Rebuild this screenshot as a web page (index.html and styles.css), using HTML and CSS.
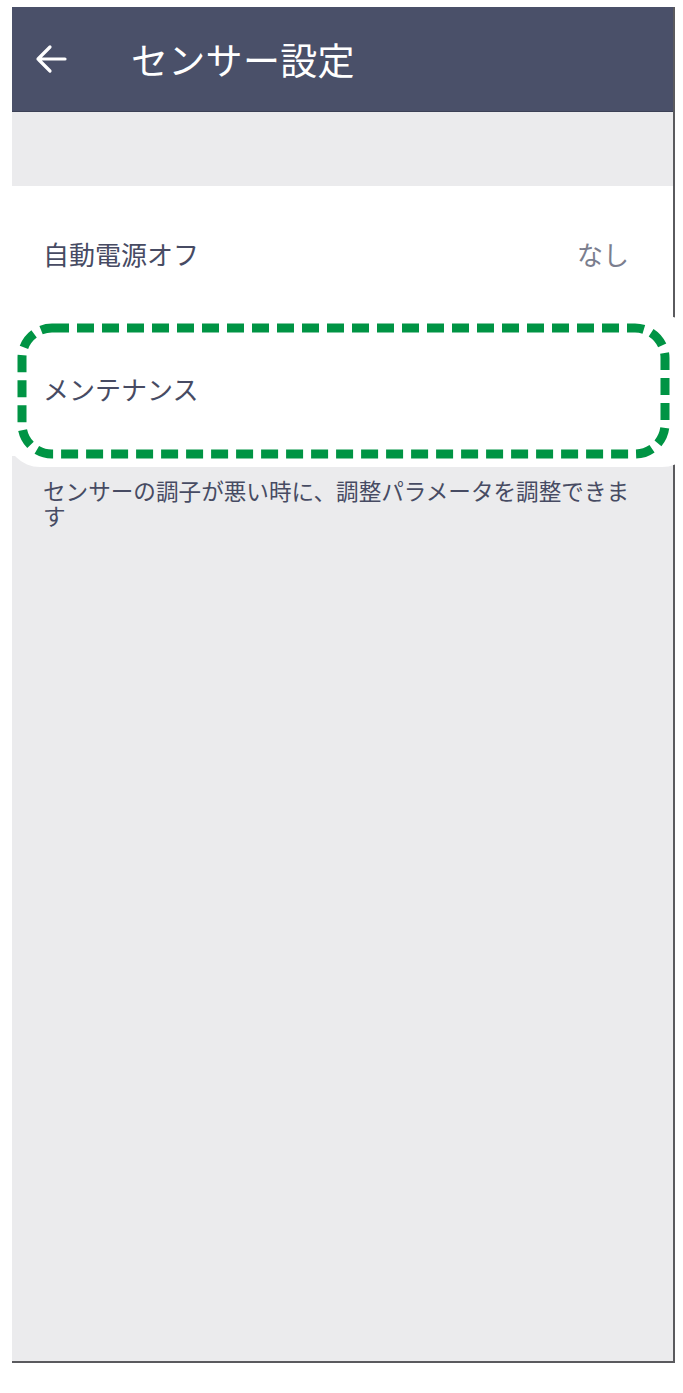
FILE: index.html
```html
<!DOCTYPE html>
<html lang="ja">
<head>
<meta charset="utf-8">
<title>センサー設定</title>
<link rel="stylesheet" href="styles.css">
</head>
<body>
<div class="frame">
  <header class="appbar">
    <svg class="back" width="34" height="30" viewBox="0 0 34 30">
      <path d="M31 15H4M16 3L4 15l12 12" fill="none" stroke="#fff" stroke-width="3.2" stroke-linecap="round" stroke-linejoin="round"/>
    </svg>
    <h1 class="title">センサー設定</h1>
  </header>
  <div class="spacer"></div>
  <ul class="list">
    <li class="row"><span class="label">自動電源オフ</span><span class="value">なし</span></li>
    <li class="row"><span class="label">メンテナンス</span></li>
  </ul>
  <p class="desc">センサーの調子が悪い時に、調整パラメータを調整できます</p>
</div>
<div class="highlight">
  <svg class="dash" width="683" height="160" viewBox="0 0 683 160">
    <rect x="22" y="13" width="643" height="126" rx="30" ry="30" fill="none" stroke="#009444" stroke-width="9" stroke-dasharray="17 8"/>
  </svg>
</div>
</body>
</html>
```

FILE: styles.css
```css
html, body {
  margin: 0;
  padding: 0;
  background: #ffffff;
}
body {
  position: relative;
  width: 683px;
  height: 1393px;
  font-family: "Noto Sans CJK JP", "Noto Sans", sans-serif;
}
.frame {
  margin: 7px 0 0 12px;
  width: 661px;
  height: 1354px;
  background: #ebebed;
  border-right: 2px solid #5a5a5e;
  border-bottom: 2px solid #5a5a5e;
  display: flex;
  flex-direction: column;
}
.appbar {
  height: 105px;
  background: #4a5069;
  border-bottom: 1px solid #3c4156;
  box-sizing: border-box;
  display: flex;
  align-items: center;
  padding-left: 22px;
}
.back {
  display: block;
}
.title {
  margin: 0 0 0 63px;
  color: #ffffff;
  font-size: 37px;
  font-weight: 400;
  line-height: 1;
  letter-spacing: 0.3px;
}
.spacer {
  height: 74px;
}
.list {
  list-style: none;
  margin: 0;
  padding: 0;
  background: #ffffff;
}
.row {
  height: 135px;
  display: flex;
  align-items: center;
  justify-content: space-between;
  padding: 0 44px 0 31px;
  font-size: 26px;
  color: #474b63;
}
.label {
  position: relative;
  z-index: 1;
}
.value {
  color: #7b7e8e;
}
.desc {
  margin: 0;
  padding: 22px 30px 0 31px;
  font-size: 22.6px;
  line-height: 25px;
  color: #474b63;
}
.highlight {
  position: absolute;
  left: 6px;
  top: 315px;
  width: 690px;
  height: 152px;
  background: #ffffff;
  border-radius: 34px;
}
.dash {
  position: absolute;
  left: -6px;
  top: 0;
}
```
